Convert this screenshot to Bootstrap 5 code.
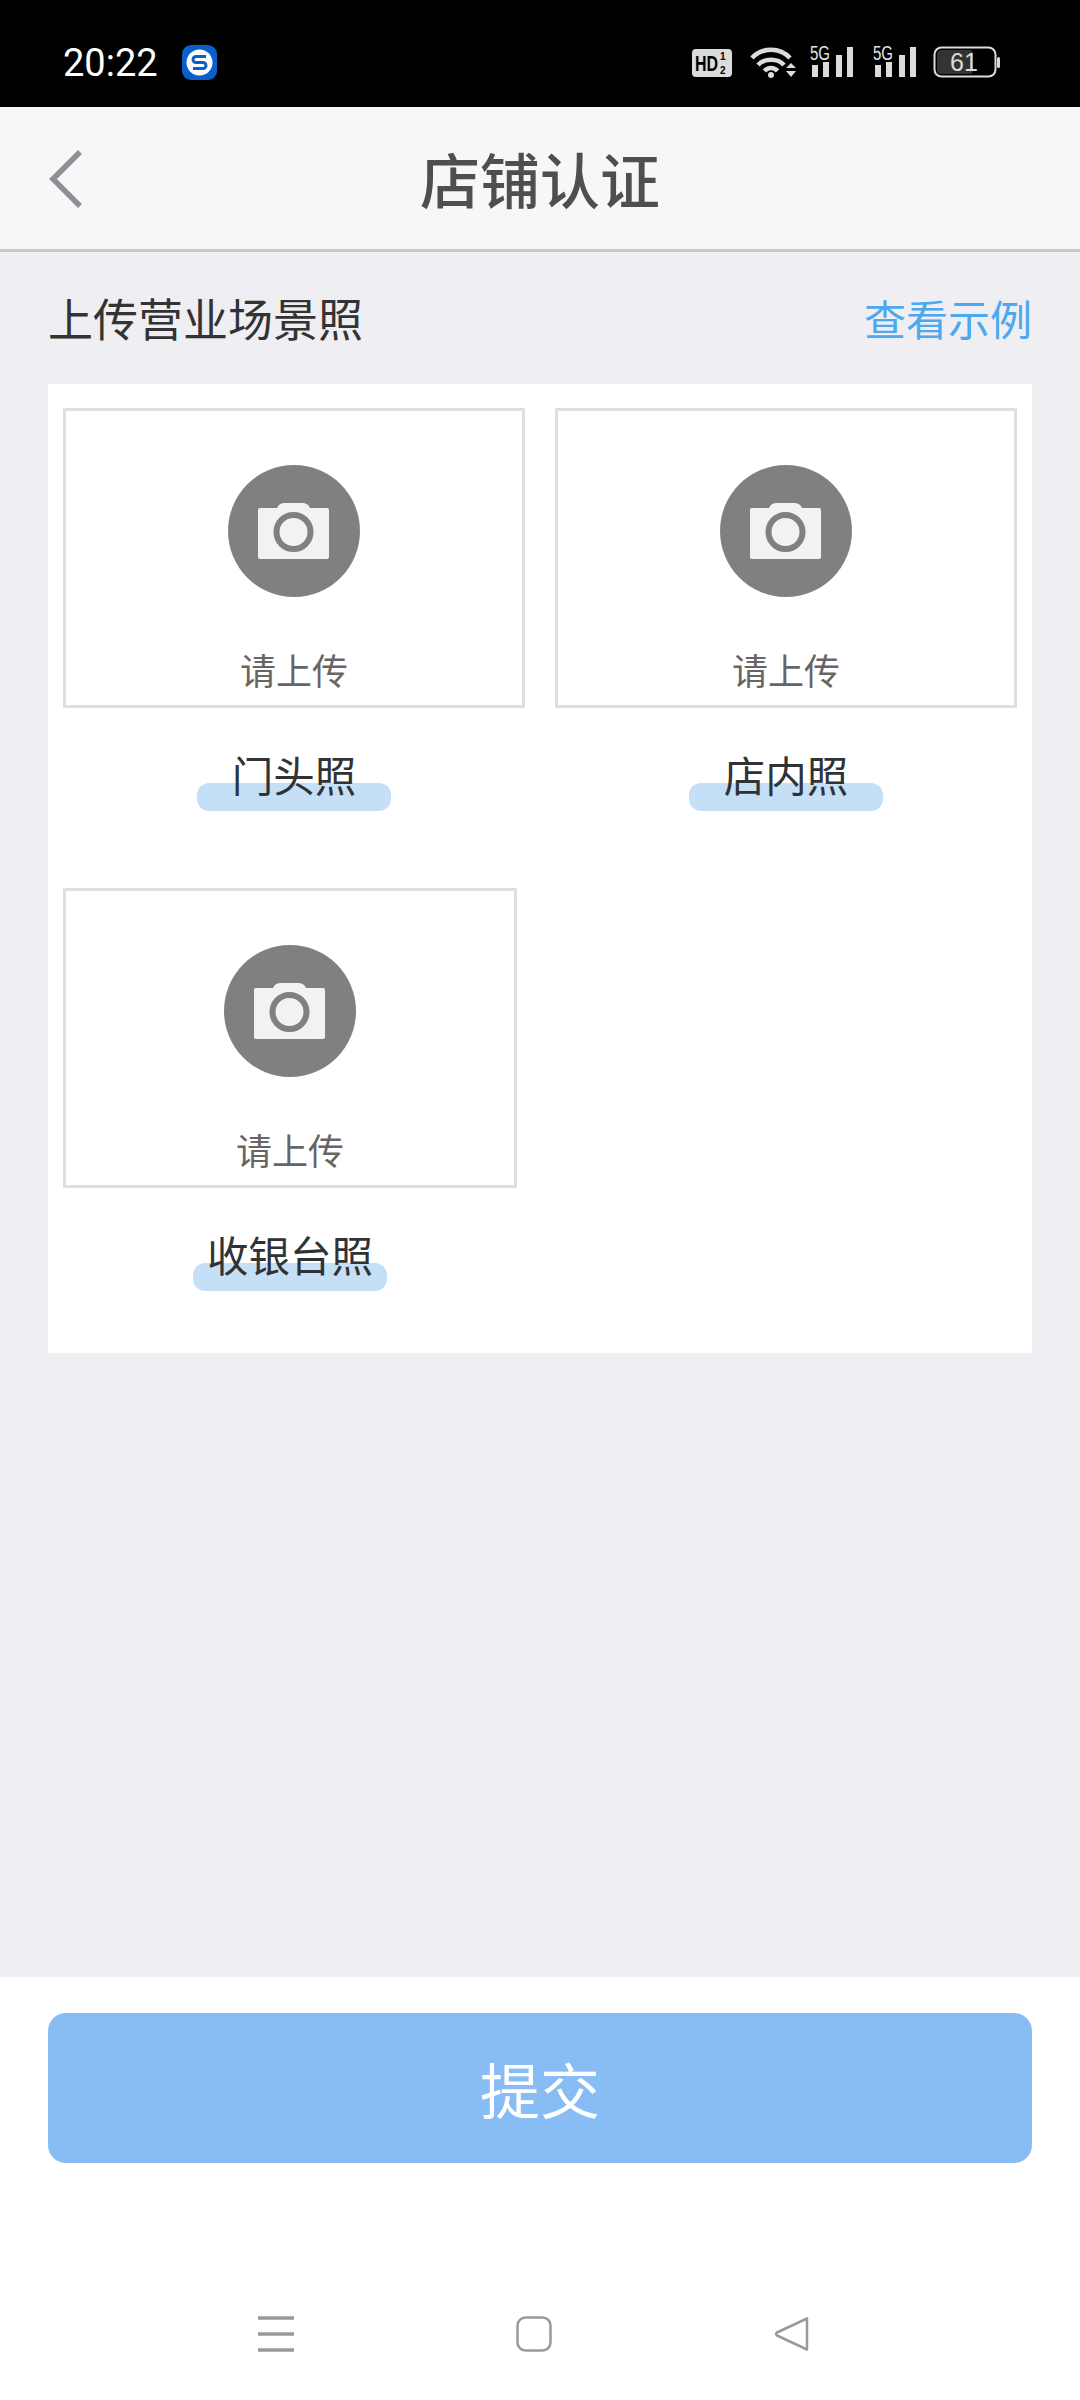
<!DOCTYPE html>
<html lang="zh">

<head>
    <meta charset="UTF-8">
    <meta name="viewport" content="width=device-width, initial-scale=1.0">
    <title>店铺认证</title>
    <link href="https://cdn.jsdelivr.net/npm/bootstrap@5.3.2/dist/css/bootstrap.min.css" rel="stylesheet">
    <style>
        body {
            width: 1080px;
            height: 2400px;
            background-color: #eeeef3;
            font-family: "Noto Sans CJK SC", "Liberation Sans", sans-serif;
        }

        .status-bar {
            height: 107px;
            background-color: #000;
            padding: 41px 0 0 63px;
        }

        .status-time {
            width: 119px;
            font-family: Roboto, sans-serif;
            font-size: 38px;
            line-height: 44px;
            color: #fff;
        }

        .status-logo {
            margin-top: 4px;
        }

        .status-icons {
            display: block;
            margin-left: 475px;
            margin-top: -1px;
            fill: #dcdcdc;
        }

        .top-bar {
            height: 145px;
            background-color: #f7f7f7;
            border-bottom: 3px solid #c9c9d1;
        }

        .top-title {
            font-size: 60px;
            font-weight: 500;
            line-height: 70px;
            color: #4f4f4f;
        }

        .back-icon {
            left: 48px;
            top: 42px;
        }

        .section-head {
            height: 132px;
            padding: 0 48px;
        }

        .section-title {
            font-size: 45px;
            line-height: 60px;
            color: #333;
        }

        .sample-link {
            font-size: 42px;
            line-height: 60px;
            color: #4da8ee;
            text-decoration: none;
        }

        .upload-panel {
            height: 969px;
            margin: 0 48px;
            padding: 24px 15px 0;
            background-color: #fff;
            column-gap: 30px;
        }

        .upload-item {
            width: 462px;
            height: 480px;
        }

        .upload-item-narrow {
            width: 454px;
        }

        .upload-tile {
            height: 300px;
            border: 3px solid #dedfe0;
            padding-top: 54px;
        }

        .upload-hint {
            margin-top: 52px;
            font-size: 36px;
            line-height: 40px;
            color: #666;
        }

        .upload-label {
            margin-top: 41px;
            font-size: 41.5px;
            line-height: 50px;
            color: #2f3336;
        }

        .label-wrap {
            width: 194px;
            height: 50px;
        }

        .label-wrap::before {
            content: "";
            position: absolute;
            left: 0;
            top: 34px;
            width: 194px;
            height: 28px;
            border-radius: 12px;
            background-color: #c5dff7;
        }

        .label-wrap span {
            position: relative;
            white-space: nowrap;
        }

        .page-fill {
            height: 624px;
        }

        .bottom-area {
            height: 423px;
            padding: 36px 48px 0;
            background-color: #fff;
        }

        .submit-btn {
            height: 150px;
            border: 0;
            border-radius: 18px;
            background-color: #88bcf4;
            color: #fff;
            font-size: 60px;
            line-height: 70px;
        }

        .submit-btn:disabled {
            background-color: #88bcf4;
            color: #fff;
            opacity: 1;
        }

        .soft-keys {
            margin-top: 153px;
            padding-left: 210px;
            gap: 222px;
        }
    </style>
</head>

<body class="m-0 overflow-hidden">
    <div class="status-bar d-flex align-items-start">
        <div class="status-time">20:22</div>
        <svg width="35" height="35" viewBox="0 0 35 35" class="status-logo d-block">
            <rect width="35" height="35" rx="9" fill="#0a5fcc" />
            <circle cx="17.500" cy="17.500" r="13" fill="#fff" />
            <path d="M24 11.500 H14 a3 3 0 0 0 0 6 H21 a3 3 0 0 1 0 6 H11" fill="none" stroke="#0a5fcc" stroke-width="3" />
        </svg>
        <svg class="status-icons" width="308" height="40" viewBox="0 -4 308 40">
            <!-- hd badge -->
            <rect x="0" y="5" width="40" height="28" rx="4" />
            <text transform="translate(3 27) scale(1 1.4)" font-family="Liberation Sans" font-size="16" font-weight="700" fill="#000">HD</text>
            <text x="28" y="16" font-family="Liberation Sans" font-size="10" font-weight="700" fill="#000">1</text>
            <text x="28" y="30" font-family="Liberation Sans" font-size="10" font-weight="700" fill="#000">2</text>
            <!-- wifi -->
            <g fill="none" stroke="#dcdcdc" stroke-width="4.500">
                <path d="M60 14 C70 3 88 3 98 14" />
                <path d="M66 21 C72 14 86 14 92 21" />
                <path d="M72.500 27 C76 23 82 23 85.500 27" />
            </g>
            <circle cx="79" cy="31" r="3" />
            <path d="M94 24 H104 L99 19 Z M94 27 H104 L99 33 Z" />
            <!-- sim 1 -->
            <text transform="translate(118 16) scale(1 1.3)" font-family="Liberation Sans" font-size="15" fill="#e4e4e4">5G</text>
            <rect x="120" y="21" width="6" height="12" />
            <rect x="131" y="18" width="6" height="15" />
            <rect x="144" y="11" width="6" height="22" />
            <rect x="155" y="3" width="6" height="30" />
            <!-- sim 2 -->
            <text transform="translate(181 16) scale(1 1.3)" font-family="Liberation Sans" font-size="15" fill="#e4e4e4">5G</text>
            <rect x="183" y="21" width="6" height="12" />
            <rect x="194" y="18" width="6" height="15" />
            <rect x="207" y="11" width="6" height="22" />
            <rect x="218" y="3" width="6" height="30" />
            <!-- battery -->
            <rect x="242.500" y="3.500" width="61" height="29" rx="7" fill="none" stroke="#dcdcdc" stroke-width="2" />
            <rect x="245" y="6" width="36" height="24" rx="4" fill="#333" />
            <rect x="305" y="13" width="3" height="11" rx="1.500" />
            <text x="258" y="27" font-family="Liberation Sans" font-size="25" fill="#dcdcdc">61</text>
        </svg>
    </div>

    <div class="top-bar d-flex align-items-center justify-content-center position-relative">
        <svg class="back-icon position-absolute" width="36" height="60" viewBox="0 0 36 60">
            <path d="M32 3 L5 30 L32 57" fill="none" stroke="#8e9099" stroke-width="5.500" />
        </svg>
        <div class="top-title">店铺认证</div>
    </div>

    <div class="section-head d-flex justify-content-between align-items-center">
        <div class="section-title">上传营业场景照</div>
        <a href="#" class="sample-link">查看示例</a>
    </div>

    <div class="upload-panel d-flex flex-wrap align-content-start">
        <div class="upload-item">
            <div class="upload-tile d-flex flex-column align-items-center">
                <svg width="132" height="132" viewBox="0 0 132 132" class="d-block">
                    <circle cx="66" cy="66" r="66" fill="#808080" />
                    <path d="M30 45 a2 2 0 0 1 2 -2 H49 Q51 38 57 38 H74 Q80 38 82 43 H99 a2 2 0 0 1 2 2 V92 a2 2 0 0 1 -2 2 H32 a2 2 0 0 1 -2 -2 Z" fill="#f2f2f2" />
                    <circle cx="65.500" cy="67" r="17" fill="none" stroke="#808080" stroke-width="6" />
                </svg>
                <div class="upload-hint">请上传</div>
            </div>
            <div class="upload-label d-flex justify-content-center">
                <div class="label-wrap position-relative d-flex justify-content-center"><span>门头照</span></div>
            </div>
        </div>
        <div class="upload-item">
            <div class="upload-tile d-flex flex-column align-items-center">
                <svg width="132" height="132" viewBox="0 0 132 132" class="d-block">
                    <circle cx="66" cy="66" r="66" fill="#808080" />
                    <path d="M30 45 a2 2 0 0 1 2 -2 H49 Q51 38 57 38 H74 Q80 38 82 43 H99 a2 2 0 0 1 2 2 V92 a2 2 0 0 1 -2 2 H32 a2 2 0 0 1 -2 -2 Z" fill="#f2f2f2" />
                    <circle cx="65.500" cy="67" r="17" fill="none" stroke="#808080" stroke-width="6" />
                </svg>
                <div class="upload-hint">请上传</div>
            </div>
            <div class="upload-label d-flex justify-content-center">
                <div class="label-wrap position-relative d-flex justify-content-center"><span>店内照</span></div>
            </div>
        </div>
        <div class="upload-item upload-item-narrow">
            <div class="upload-tile d-flex flex-column align-items-center">
                <svg width="132" height="132" viewBox="0 0 132 132" class="d-block">
                    <circle cx="66" cy="66" r="66" fill="#808080" />
                    <path d="M30 45 a2 2 0 0 1 2 -2 H49 Q51 38 57 38 H74 Q80 38 82 43 H99 a2 2 0 0 1 2 2 V92 a2 2 0 0 1 -2 2 H32 a2 2 0 0 1 -2 -2 Z" fill="#f2f2f2" />
                    <circle cx="65.500" cy="67" r="17" fill="none" stroke="#808080" stroke-width="6" />
                </svg>
                <div class="upload-hint">请上传</div>
            </div>
            <div class="upload-label d-flex justify-content-center">
                <div class="label-wrap position-relative d-flex justify-content-center"><span>收银台照</span></div>
            </div>
        </div>
    </div>

    <div class="page-fill"></div>

    <div class="bottom-area">
        <button class="btn submit-btn w-100 d-block" disabled>提交</button>
        <div class="soft-keys d-flex">
            <svg width="36" height="36" viewBox="0 0 36 36" class="d-block">
                <path d="M0 2 H36 M0 18 H36 M0 34 H36" stroke="#999" stroke-width="3.500" />
            </svg>
            <svg width="36" height="36" viewBox="0 0 36 36" class="d-block">
                <rect x="1.500" y="1.500" width="33" height="33" rx="8" fill="none" stroke="#999" stroke-width="2.500" />
            </svg>
            <svg width="36" height="36" viewBox="0 0 36 36" class="d-block">
                <path d="M33 2.500 V33.500 L3 19.500 Q1 18 3 16.500 Z" fill="none" stroke="#999" stroke-width="2.500" stroke-linejoin="round" />
            </svg>
        </div>
    </div>

    <script src="https://cdn.jsdelivr.net/npm/bootstrap@5.3.2/dist/js/bootstrap.bundle.min.js"></script>
</body>

</html>
